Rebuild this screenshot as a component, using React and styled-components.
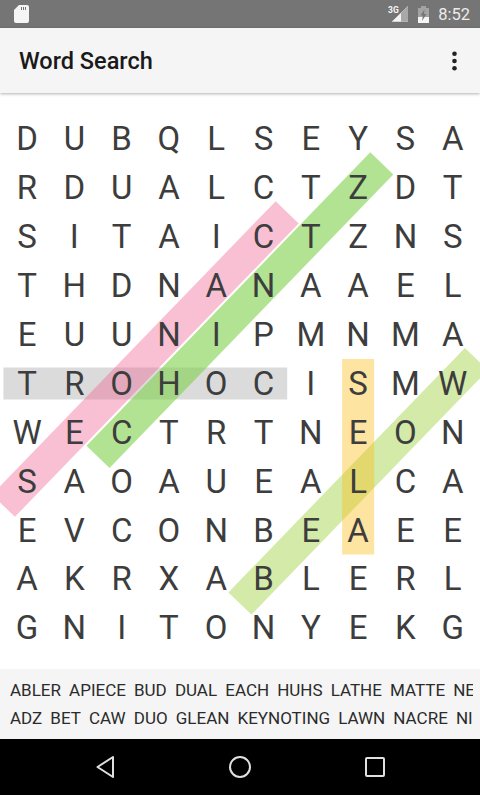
import React from 'react'
import styled, { createGlobalStyle } from 'styled-components'

const GlobalStyle = createGlobalStyle`
  html, body {
    margin: 0;
    padding: 0;
    background: #fff;
  }
  body {
    font-family: Roboto, "Liberation Sans", sans-serif;
  }
`

const CELL_W = 47.3
const CELL_H = 48.9
const GRID_LEFT = 3.4
const GRID_TOP = 21.5
const BAND = 32

const rows = [
  'DUBQLSEYSA',
  'RDUALCTZDT',
  'SITAICTZNS',
  'THDNANAAEL',
  'EUUNIPMNMA',
  'TROHOCISMW',
  'WECTRTNEON',
  'SAOAUEALCA',
  'EVCONBEAEE',
  'AKRXABLERL',
  'GNITONYEKG',
]

// found words, [row, col] of first and last letter
const found = [
  { from: [5, 0], to: [5, 5], color: '#000', opacity: 0.14 },
  { from: [7, 0], to: [2, 5], color: '#f06292', opacity: 0.4 },
  { from: [6, 2], to: [1, 7], color: '#7fd14a', opacity: 0.6 },
  { from: [9, 5], to: [5, 9], color: '#a2d34a', opacity: 0.48 },
  { from: [5, 7], to: [8, 7], color: '#fbbe20', opacity: 0.42 },
]

const wordLines = [
  ['ABLER', 'APIECE', 'BUD', 'DUAL', 'EACH', 'HUHS', 'LATHE', 'MATTE', 'NE'],
  ['ADZ', 'BET', 'CAW', 'DUO', 'GLEAN', 'KEYNOTING', 'LAWN', 'NACRE', 'NI'],
]

const Screen = styled.div`
  display: flex;
  flex-direction: column;
  width: 480px;
  height: 795px;
  overflow: hidden;
`

const StatusBar = styled.div`
  display: flex;
  align-items: center;
  flex: 0 0 28px;
  padding: 0 10px 0 14px;
  background: #757575;
`

const StatusRight = styled.div`
  display: flex;
  align-items: center;
  margin-left: auto;
`

const Clock = styled.span`
  margin-left: 9px;
  color: #ececec;
  font-size: 16.5px;
  font-weight: 400;
`

const AppBar = styled.header`
  position: relative;
  z-index: 2;
  display: flex;
  align-items: center;
  justify-content: space-between;
  flex: 0 0 65px;
  box-sizing: border-box;
  padding: 1px 23px 0 19px;
  background: #f5f5f5;
  box-shadow: 0 1px 3px rgba(0, 0, 0, 0.3);
`

const Title = styled.h1`
  margin: 0;
  color: #1a1a1a;
  font-size: 23.5px;
  font-weight: 500;
`

const Board = styled.main`
  position: relative;
  flex: 1;
  background: #fff;
`

const Highlights = styled.svg`
  position: absolute;
  top: 0;
  left: 0;
`

const LetterGrid = styled.div`
  position: relative;
  display: grid;
  grid-template-columns: repeat(10, ${CELL_W}px);
  grid-auto-rows: ${CELL_H}px;
  padding: ${GRID_TOP}px 0 0 ${GRID_LEFT}px;
`

const Letter = styled.span`
  display: flex;
  align-items: center;
  justify-content: center;
  color: #3d3d3d;
  font-size: 33px;
  font-weight: 400;
  line-height: 1;
`

const WordBar = styled.section`
  display: flex;
  flex-direction: column;
  flex: 0 0 70px;
  box-sizing: border-box;
  padding: 7px 7px 0 10px;
  background: #f5f5f5;
  box-shadow: 0 -1px 1px rgba(0, 0, 0, 0.05);
`

const WordLine = styled.div`
  display: flex;
  gap: 8.1px;
  height: 28px;
  align-items: center;
  overflow: hidden;
`

const Word = styled.span`
  color: #2b2b2b;
  font-size: 17px;
  white-space: nowrap;
`

const NavBar = styled.nav`
  display: flex;
  align-items: center;
  justify-content: center;
  gap: 111px;
  flex: 0 0 56px;
  background: #000;
`

const NavIcon = styled.svg`
  display: block;
  width: 24px;
  height: 24px;
  fill: none;
  stroke: #e0e0e0;
  stroke-width: 2;
  stroke-linejoin: round;
`

// band runs from corner to corner of the first and last cell
const bandLine = ({ from, to }) => {
  const cx = (c) => GRID_LEFT + (c + 0.5) * CELL_W
  const cy = (r) => GRID_TOP + (r + 0.5) * CELL_H
  const dr = Math.sign(to[0] - from[0])
  const dc = Math.sign(to[1] - from[1])
  return {
    x1: cx(from[1]) - (dc * CELL_W) / 2,
    y1: cy(from[0]) - (dr * CELL_H) / 2,
    x2: cx(to[1]) + (dc * CELL_W) / 2,
    y2: cy(to[0]) + (dr * CELL_H) / 2,
  }
}

const SdCard = () => (
  <svg width="15" height="18" viewBox="0 0 15 18">
    <path d="M5 0h8a2 2 0 0 1 2 2v14a2 2 0 0 1-2 2H2a2 2 0 0 1-2-2V5z" fill="#f5f5f5" />
    <path d="M7 2h1v3H7zM9 2h1v3H9zM11 2h1v3h-1z" fill="#757575" />
  </svg>
)

const Signal = () => (
  <svg width="30" height="20" viewBox="0 0 30 20">
    <text x="0" y="8.5" fill="#f5f5f5" fontSize="8.5" fontWeight="700" fontFamily="Roboto, sans-serif">3G</text>
    <path d="M3.7 17.8 L20 17.8 L20 2 Z" fill="#f5f5f5" />
    <path d="M13 9 L20 2 L20 17.8 L13 17.8 Z" fill="#a8a8a8" />
  </svg>
)

const Battery = () => (
  <svg width="11" height="17" viewBox="0 0 11 17">
    <path d="M3 0h5v2h3v15H0V2h3z" fill="#a3a3a3" />
    <path d="M0 11h11v6H0z" fill="#f5f5f5" />
    <path d="M6.5 3.5 L2.5 9.5 L5 9.5 L4 15 L8.5 8 L6 8 Z" fill="#757575" />
  </svg>
)

const Overflow = () => (
  <svg width="5" height="20" viewBox="0 0 5 20">
    <circle cx="2.5" cy="2.7" r="2.3" fill="#222" />
    <circle cx="2.5" cy="10" r="2.3" fill="#222" />
    <circle cx="2.5" cy="17.3" r="2.3" fill="#222" />
  </svg>
)

export default function App() {
  return (
    <Screen>
      <GlobalStyle />
      <StatusBar>
        <SdCard />
        <StatusRight>
          <Signal />
          <Battery />
          <Clock>8:52</Clock>
        </StatusRight>
      </StatusBar>
      <AppBar>
        <Title>Word Search</Title>
        <Overflow />
      </AppBar>
      <Board>
        <Highlights width="480" height="576">
          {found.map((band, i) => (
            <line key={i} {...bandLine(band)} stroke={band.color} strokeOpacity={band.opacity} strokeWidth={BAND} />
          ))}
        </Highlights>
        <LetterGrid>
          {rows.map((row, r) =>
            row.split('').map((ch, c) => <Letter key={`${r}-${c}`}>{ch}</Letter>)
          )}
        </LetterGrid>
      </Board>
      <WordBar>
        {wordLines.map((line) => (
          <WordLine key={line[0]}>
            {line.map((w) => (
              <Word key={w}>{w}</Word>
            ))}
          </WordLine>
        ))}
      </WordBar>
      <NavBar>
        <NavIcon viewBox="0 0 24 24">
          <path d="M20 2 L4.5 12 L20 22 Z" />
        </NavIcon>
        <NavIcon viewBox="0 0 24 24">
          <circle cx="12" cy="12" r="10" />
        </NavIcon>
        <NavIcon viewBox="0 0 24 24">
          <rect x="3" y="3" width="18" height="18" rx="1" />
        </NavIcon>
      </NavBar>
    </Screen>
  )
}
